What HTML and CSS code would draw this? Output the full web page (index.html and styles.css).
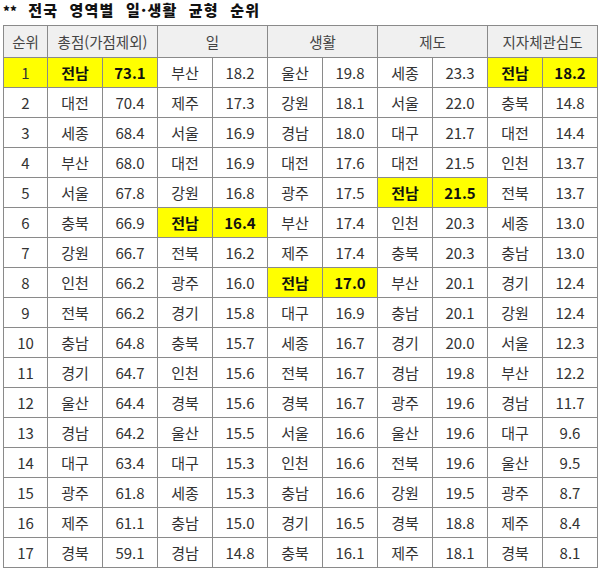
FILE: index.html
```html
<!DOCTYPE html>
<html lang="ko">
<head>
<meta charset="utf-8">
<link rel="stylesheet" href="styles.css">
</head>
<body>
<div class="page">
  <h1 class="title"><span class="stars">**</span> 전국 영역별 일·생활 균형 순위</h1>
  <table class="rank">
    <colgroup>
      <col class="c-rank">
      <col><col><col><col><col><col><col><col><col><col>
    </colgroup>
    <thead>
      <tr>
        <th>순위</th>
        <th colspan="2">총점(가점제외)</th>
        <th colspan="2">일</th>
        <th colspan="2">생활</th>
        <th colspan="2">제도</th>
        <th colspan="2">지자체관심도</th>
      </tr>
    </thead>
    <tbody>
      <tr><td class="hl">1</td><td class="hl b">전남</td><td class="hl b">73.1</td><td>부산</td><td>18.2</td><td>울산</td><td>19.8</td><td>세종</td><td>23.3</td><td class="hl b">전남</td><td class="hl b">18.2</td></tr>
      <tr><td>2</td><td>대전</td><td>70.4</td><td>제주</td><td>17.3</td><td>강원</td><td>18.1</td><td>서울</td><td>22.0</td><td>충북</td><td>14.8</td></tr>
      <tr><td>3</td><td>세종</td><td>68.4</td><td>서울</td><td>16.9</td><td>경남</td><td>18.0</td><td>대구</td><td>21.7</td><td>대전</td><td>14.4</td></tr>
      <tr><td>4</td><td>부산</td><td>68.0</td><td>대전</td><td>16.9</td><td>대전</td><td>17.6</td><td>대전</td><td>21.5</td><td>인천</td><td>13.7</td></tr>
      <tr><td>5</td><td>서울</td><td>67.8</td><td>강원</td><td>16.8</td><td>광주</td><td>17.5</td><td class="hl b">전남</td><td class="hl b">21.5</td><td>전북</td><td>13.7</td></tr>
      <tr><td>6</td><td>충북</td><td>66.9</td><td class="hl b">전남</td><td class="hl b">16.4</td><td>부산</td><td>17.4</td><td>인천</td><td>20.3</td><td>세종</td><td>13.0</td></tr>
      <tr><td>7</td><td>강원</td><td>66.7</td><td>전북</td><td>16.2</td><td>제주</td><td>17.4</td><td>충북</td><td>20.3</td><td>충남</td><td>13.0</td></tr>
      <tr><td>8</td><td>인천</td><td>66.2</td><td>광주</td><td>16.0</td><td class="hl b">전남</td><td class="hl b">17.0</td><td>부산</td><td>20.1</td><td>경기</td><td>12.4</td></tr>
      <tr><td>9</td><td>전북</td><td>66.2</td><td>경기</td><td>15.8</td><td>대구</td><td>16.9</td><td>충남</td><td>20.1</td><td>강원</td><td>12.4</td></tr>
      <tr><td>10</td><td>충남</td><td>64.8</td><td>충북</td><td>15.7</td><td>세종</td><td>16.7</td><td>경기</td><td>20.0</td><td>서울</td><td>12.3</td></tr>
      <tr><td>11</td><td>경기</td><td>64.7</td><td>인천</td><td>15.6</td><td>전북</td><td>16.7</td><td>경남</td><td>19.8</td><td>부산</td><td>12.2</td></tr>
      <tr><td>12</td><td>울산</td><td>64.4</td><td>경북</td><td>15.6</td><td>경북</td><td>16.7</td><td>광주</td><td>19.6</td><td>경남</td><td>11.7</td></tr>
      <tr><td>13</td><td>경남</td><td>64.2</td><td>울산</td><td>15.5</td><td>서울</td><td>16.6</td><td>울산</td><td>19.6</td><td>대구</td><td>9.6</td></tr>
      <tr><td>14</td><td>대구</td><td>63.4</td><td>대구</td><td>15.3</td><td>인천</td><td>16.6</td><td>전북</td><td>19.6</td><td>울산</td><td>9.5</td></tr>
      <tr><td>15</td><td>광주</td><td>61.8</td><td>세종</td><td>15.3</td><td>충남</td><td>16.6</td><td>강원</td><td>19.5</td><td>광주</td><td>8.7</td></tr>
      <tr><td>16</td><td>제주</td><td>61.1</td><td>충남</td><td>15.0</td><td>경기</td><td>16.5</td><td>경북</td><td>18.8</td><td>제주</td><td>8.4</td></tr>
      <tr><td>17</td><td>경북</td><td>59.1</td><td>경남</td><td>14.8</td><td>충북</td><td>16.1</td><td>제주</td><td>18.1</td><td>경북</td><td>8.1</td></tr>
    </tbody>
  </table>
</div>
</body>
</html>
```
FILE: styles.css
```css
html, body {
  margin: 0;
  padding: 0;
  background: #ffffff;
}
.page {
  padding: 0 3px 0 3px;
  font-family: "Noto Sans CJK KR", "Noto Sans", sans-serif;
  color: #2a2a2a;
}
.title {
  margin: 0;
  height: 25px;
  line-height: 20px;
  font-size: 15px;
  font-weight: 900;
  color: #111;
  letter-spacing: 1.2px;
  word-spacing: 6px;
  white-space: nowrap;
}
.stars {
  font-size: 13px;
  letter-spacing: 0;
  word-spacing: 0;
}
.rank {
  border-collapse: collapse;
  table-layout: fixed;
  width: 594px;
}
.rank col { width: 55px; }
.rank col.c-rank { width: 44px; }
.rank th, .rank td {
  border: 1px solid #8a8a8a;
  padding: 0;
  text-align: center;
  white-space: nowrap;
  overflow: hidden;
}
.rank th {
  height: 31px;
  background: #f0f0f0;
  font-weight: normal;
  font-size: 14.5px;
  color: #444;
}
.rank td {
  height: 29px;
  font-size: 15px;
  color: #333;
}
.rank td.hl {
  background: #ffff00;
}
.rank td.b {
  font-weight: bold;
  color: #111;
}
```
